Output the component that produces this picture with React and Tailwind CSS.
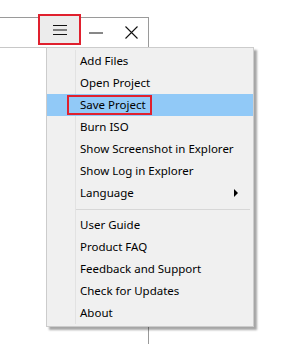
const groups = [
    ['Add Files', 'Open Project', 'Save Project', 'Burn ISO', 'Show Screenshot in Explorer', 'Show Log in Explorer', 'Language'],
    ['User Guide', 'Product FAQ', 'Feedback and Support', 'Check for Updates', 'About'],
];

function MenuItem({ label }) {
    const active = label === 'Save Project';
    const hasSub = label === 'Language';
    return (
        <div className={`relative flex h-[22px] items-center whitespace-nowrap pl-[33px] pr-[14px] ${active ? 'bg-[#91c9f7]' : ''}`}>
            {active ? (
                <span className="-ml-[13px] flex h-[20px] items-center border-2 border-[#e0202e] pl-[11px] pr-[4px]">
                    {label}
                </span>
            ) : (
                <span>{label}</span>
            )}
            {hasSub && (
                <span className="ml-auto mr-[1px] h-0 w-0 border-y-[4px] border-l-[4px] border-y-transparent border-l-black" />
            )}
        </div>
    );
}

export default function App() {
    return (
        <div className="relative h-[344px] w-[299px] overflow-hidden bg-white text-[11.5px] text-black" style={{ fontFamily: '"Noto Sans", "Open Sans", sans-serif' }}>
            {/* Window */}
            <div className="absolute left-0 top-[17px] h-[340px] w-[149px] border-r border-t border-[#9a9a9a]">
                <div className="flex h-[30px] items-center justify-end border-b border-[#c8c8c8] pr-[10px]">
                    <div className="mr-[8px] flex h-[31px] w-[43px] -translate-y-[3px] items-center justify-center border-2 border-[#e0202e] bg-[#ececec]">
                        <svg width="16" height="12" viewBox="0 0 16 12">
                            <path d="M1 1.5H15M1 6H15M1 10.5H15" stroke="#111" strokeWidth="1" />
                        </svg>
                    </div>
                    <svg className="mr-[22px]" width="14" height="2" viewBox="0 0 14 2">
                        <path d="M0 1H14" stroke="#111" strokeWidth="1" />
                    </svg>
                    <svg width="13" height="13" viewBox="0 0 13 13">
                        <path d="M0.5 0.5L12.5 12.5M12.5 0.5L0.5 12.5" stroke="#111" strokeWidth="1.1" />
                    </svg>
                </div>
            </div>

            {/* Context menu */}
            <div className="absolute left-[46px] top-[47px] w-[208px] border border-[#cccccc] bg-[#f0f0f0] py-[2px] shadow-[3px_3px_2px_rgba(0,0,0,0.35)]">
                <div className="absolute bottom-[2px] left-[28px] top-[2px] w-px bg-[#e2e2e2]" />
                <div className="relative">
                    {groups[0].map((l) => <MenuItem key={l} label={l} />)}
                    <div className="flex h-[10px] items-center pl-[29px] pr-[3px]">
                        <div className="h-px w-full bg-[#d7d7d7]" />
                    </div>
                    {groups[1].map((l) => <MenuItem key={l} label={l} />)}
                </div>
            </div>
        </div>
    );
}
